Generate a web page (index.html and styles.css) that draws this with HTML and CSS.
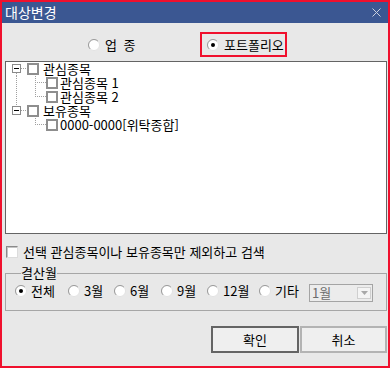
FILE: index.html
```html
<!DOCTYPE html>
<html lang="ko">
<head>
<meta charset="utf-8">
<title>대상변경</title>
<link rel="stylesheet" href="styles.css">
</head>
<body>
<div class="window">
  <div class="titlebar">
    <span class="title">대상변경</span>
    <svg class="close" viewBox="0 0 9 9"><path d="M0.5 0.5 L8.5 8.5 M8.5 0.5 L0.5 8.5" stroke="#c9d0de" stroke-width="1" fill="none"/></svg>
  </div>
  <div class="content">
    <div class="toprow">
      <label class="radio opt-industry">
        <svg viewBox="0 0 12 12"><circle cx="6" cy="6" r="5.5" fill="#fff" stroke="#e2e2e2"/><path d="M2.1 9.9 A5.5 5.5 0 0 1 9.9 2.1" stroke="#9a9a9a" fill="none"/></svg>
        <span>업 종</span>
      </label>
      <label class="radio selected-box">
        <svg viewBox="0 0 12 12"><circle cx="6" cy="6" r="5.5" fill="#fff" stroke="#e2e2e2"/><path d="M2.1 9.9 A5.5 5.5 0 0 1 9.9 2.1" stroke="#9a9a9a" fill="none"/><circle cx="6" cy="6" r="2" fill="#000"/></svg>
        <span>포트폴리오</span>
      </label>
    </div>

    <div class="tree">
      <div class="row">
        <svg class="gutter g-root" viewBox="0 0 21 14">
          <rect x="6.5" y="2.5" width="8" height="8" fill="#fff" stroke="#8a8a8a"/>
          <path d="M8 6.5 H13" stroke="#000"/>
          <path d="M15 6.5 H21 M10.5 11 V14" stroke="#a0a0a0" stroke-dasharray="1 1"/>
        </svg>
        <span class="cb"></span><span class="lbl">관심종목</span>
      </div>
      <div class="row">
        <svg class="gutter g-child" viewBox="0 0 40 14">
          <path d="M10.5 0 V14 M29.5 0 V14 M31 6.5 H40" stroke="#a0a0a0" stroke-dasharray="1 1"/>
        </svg>
        <span class="cb"></span><span class="lbl lbl-child">관심종목 1</span>
      </div>
      <div class="row">
        <svg class="gutter g-child" viewBox="0 0 40 14">
          <path d="M10.5 0 V14 M29.5 0 V7 M31 6.5 H40" stroke="#a0a0a0" stroke-dasharray="1 1"/>
        </svg>
        <span class="cb"></span><span class="lbl lbl-child">관심종목 2</span>
      </div>
      <div class="row">
        <svg class="gutter g-root" viewBox="0 0 21 14">
          <path d="M10.5 0 V2" stroke="#a0a0a0" stroke-dasharray="1 1"/>
          <rect x="6.5" y="2.5" width="8" height="8" fill="#fff" stroke="#8a8a8a"/>
          <path d="M8 6.5 H13" stroke="#000"/>
          <path d="M15 6.5 H21" stroke="#a0a0a0" stroke-dasharray="1 1"/>
        </svg>
        <span class="cb"></span><span class="lbl">보유종목</span>
      </div>
      <div class="row">
        <svg class="gutter g-child" viewBox="0 0 40 14">
          <path d="M29.5 0 V7 M31 6.5 H40" stroke="#a0a0a0" stroke-dasharray="1 1"/>
        </svg>
        <span class="cb"></span><span class="lbl lbl-child">0000-0000[위탁종합]</span>
      </div>
    </div>

    <label class="check-row"><span class="cb3d"></span><span>선택 관심종목이나 보유종목만 제외하고 검색</span></label>

    <fieldset class="group">
      <legend>결산월</legend>
      <div class="group-row">
        <label class="radio m-all">
          <svg viewBox="0 0 12 12"><circle cx="6" cy="6" r="5.5" fill="#fff" stroke="#e2e2e2"/><path d="M2.1 9.9 A5.5 5.5 0 0 1 9.9 2.1" stroke="#9a9a9a" fill="none"/><circle cx="6" cy="6" r="2" fill="#000"/></svg>
          <span>전체</span>
        </label>
        <label class="radio m-3">
          <svg viewBox="0 0 12 12"><circle cx="6" cy="6" r="5.5" fill="#fff" stroke="#e2e2e2"/><path d="M2.1 9.9 A5.5 5.5 0 0 1 9.9 2.1" stroke="#9a9a9a" fill="none"/></svg>
          <span>3월</span>
        </label>
        <label class="radio m-6">
          <svg viewBox="0 0 12 12"><circle cx="6" cy="6" r="5.5" fill="#fff" stroke="#e2e2e2"/><path d="M2.1 9.9 A5.5 5.5 0 0 1 9.9 2.1" stroke="#9a9a9a" fill="none"/></svg>
          <span>6월</span>
        </label>
        <label class="radio m-9">
          <svg viewBox="0 0 12 12"><circle cx="6" cy="6" r="5.5" fill="#fff" stroke="#e2e2e2"/><path d="M2.1 9.9 A5.5 5.5 0 0 1 9.9 2.1" stroke="#9a9a9a" fill="none"/></svg>
          <span>9월</span>
        </label>
        <label class="radio m-12">
          <svg viewBox="0 0 12 12"><circle cx="6" cy="6" r="5.5" fill="#fff" stroke="#e2e2e2"/><path d="M2.1 9.9 A5.5 5.5 0 0 1 9.9 2.1" stroke="#9a9a9a" fill="none"/></svg>
          <span>12월</span>
        </label>
        <label class="radio m-etc">
          <svg viewBox="0 0 12 12"><circle cx="6" cy="6" r="5.5" fill="#fff" stroke="#e2e2e2"/><path d="M2.1 9.9 A5.5 5.5 0 0 1 9.9 2.1" stroke="#9a9a9a" fill="none"/></svg>
          <span>기타</span>
        </label>
        <div class="combo">
          <span class="combo-text">1월</span>
          <span class="combo-btn"><svg viewBox="0 0 7 4"><path d="M0 0 H7 L3.5 4 Z" fill="#a8a8a8"/></svg></span>
        </div>
      </div>
    </fieldset>

    <div class="buttons">
      <button class="btn btn-default" type="button">확인</button>
      <button class="btn btn-cancel" type="button">취소</button>
    </div>
  </div>
</div>
</body>
</html>
```
FILE: styles.css
```css
* { box-sizing: border-box; }
html, body { margin: 0; padding: 0; }
body {
  font-family: "Noto Sans CJK KR", "Noto Sans", sans-serif;
  font-size: 13px;
  color: #000;
  background: #fff;
}
.window {
  width: 390px;
  height: 368px;
  border: 2px solid #f0102d;
  background: #e8e8e8;
  display: flex;
  flex-direction: column;
}
.titlebar {
  height: 21px;
  flex: none;
  background: #3b5792;
  color: #fff;
  display: flex;
  align-items: center;
  justify-content: space-between;
  padding: 0 7px 0 3px;
}
.title { font-size: 14px; line-height: 21px; }
.close { width: 9px; height: 9px; display: block; }

.content {
  display: flex;
  flex-direction: column;
  padding: 0 1px 0 3px;
}

.radio {
  display: inline-flex;
  align-items: center;
  gap: 4px;
  height: 14px;
  line-height: 14px;
  white-space: nowrap;
}
.radio svg { width: 12px; height: 12px; flex: none; display: block; }

.toprow {
  display: flex;
  align-items: center;
  height: 25px;
  margin: 9px 0 4px;
  padding-left: 83px;
}
.opt-industry { width: 112px; gap: 5px; word-spacing: 3px; }
.selected-box {
  width: 87px;
  height: 25px;
  border: 2px solid #f0102d;
  padding-left: 5px;
  gap: 5px;
}

.tree {
  height: 173px;
  background: #fff;
  border: 1px solid #646464;
  display: flex;
  flex-direction: column;
}
.row {
  display: flex;
  align-items: center;
  height: 14px;
  line-height: 14px;
  white-space: nowrap;
}
.gutter { flex: none; height: 14px; display: block; shape-rendering: crispEdges; }
.g-root { width: 21px; }
.g-child { width: 40px; }
.cb {
  width: 12px;
  height: 12px;
  flex: none;
  background: #fff;
  border: 2px solid #8e8e8e;
}
.lbl { margin-left: 4px; }
.lbl-child { margin-left: 2px; }

.check-row {
  display: flex;
  align-items: center;
  height: 14px;
  line-height: 14px;
  margin: 11px 0 0 1px;
  gap: 5px;
}
.cb3d {
  width: 12px;
  height: 12px;
  flex: none;
  background: #fff;
  border: 1px solid;
  border-color: #8a8a8a #dcdcdc #dcdcdc #8a8a8a;
  box-shadow: inset 1px 1px 0 #c4c4c4;
}

.group {
  margin: 7px 0 0;
  padding: 4px 0 8px 9px;
  border: 1px solid #a6a6a6;
  min-width: 0;
}
.group legend {
  padding: 0;
  margin-left: 6px;
  line-height: 14px;
  height: 14px;
}
.group-row {
  display: flex;
  align-items: flex-start;
  height: 18px;
}
.m-all { width: 53px; }
.m-3 { width: 46px; }
.m-6 { width: 47px; }
.m-9 { width: 46px; }
.m-12 { width: 52px; }
.m-etc { width: 50px; }

.combo {
  width: 64px;
  height: 18px;
  border: 1px solid #a4a4a4;
  background: #ececec;
  display: flex;
  align-items: center;
  justify-content: space-between;
  padding: 0 1px 0 2px;
  color: #6d6d6d;
  line-height: 16px;
}
.combo-btn {
  width: 14px;
  height: 12px;
  border: 1px solid #cfcfcf;
  background: #f4f4f4;
  display: flex;
  align-items: center;
  justify-content: center;
}
.combo-btn svg { width: 7px; height: 4px; display: block; }

.buttons {
  display: flex;
  justify-content: flex-end;
  gap: 1px;
  margin-top: 15px;
}
.btn {
  height: 27px;
  padding: 0;
  font: inherit;
  color: #000;
  background: #efefef;
  border: 1px solid #a9a9a9;
}
.btn-default { width: 88px; border: 2px solid #646464; }
.btn-cancel { width: 87px; border: 2px solid #b3b3b3; }
```
